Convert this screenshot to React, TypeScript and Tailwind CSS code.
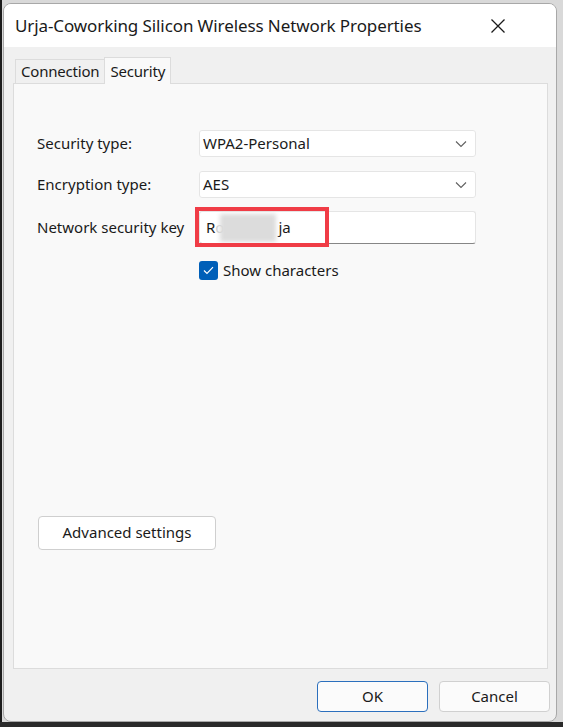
import React from "react";

const font = { fontFamily: '"Segoe UI", "Noto Sans", "Open Sans", sans-serif' };

function Chevron() {
  return (
    <svg width="12" height="8" viewBox="0 0 12 8" className="mr-[8px]">
      <path d="M1 1.5 L6 6.5 L11 1.5" fill="none" stroke="#5f5f5f" strokeWidth="1.1" />
    </svg>
  );
}

export default function App() {
  return (
    <div className="w-[563px] h-[727px] bg-[#d9d9d9] overflow-hidden relative" style={font}>
      <div className="absolute left-0 top-0 w-[2px] h-full bg-[#1c1c1c]" />
      <div className="absolute left-0 bottom-0 w-full h-[5px] bg-[#2a2a2a]" />
      <div className="ml-[3px] mt-[3px] w-[554px] h-[719px] rounded-[8px] border border-[#a8a8a8] bg-[#f0f0f0] overflow-hidden flex flex-col relative z-10">
        {/* title bar */}
        <div className="h-[43px] bg-white flex items-center justify-between shrink-0">
          <span className="ml-[11px] text-[17px] tracking-[-0.1px] text-[#1a1a1a] leading-none">
            Urja-Coworking Silicon Wireless Network Properties
          </span>
          <svg width="16" height="16" viewBox="0 0 16 16" className="mr-[50px]">
            <path d="M1.5 1.5 L14.5 14.5 M14.5 1.5 L1.5 14.5" stroke="#1a1a1a" strokeWidth="1.3" />
          </svg>
        </div>
        {/* tabs */}
        <div className="flex items-end ml-[11px] mt-[10px] h-[26px] text-[15px] text-[#1a1a1a]">
          <div className="h-[24px] px-[5px] flex items-center border-t border-l border-[#dcdcdc] bg-[#f0f0f0] tracking-[-0.2px]">Connection</div>
          <div className="h-[27px] px-[5px] flex items-center border-t border-l border-r border-[#dcdcdc] bg-[#f9f9f9] -mb-px relative z-10 tracking-[-0.2px]">Security</div>
        </div>
        <div className="ml-[9px] mr-[8px] h-[586px] bg-[#f9f9f9] border border-[#dcdcdc] flex flex-col text-[15px] text-[#1a1a1a]">
          <div className="mt-[46px] ml-[23px] flex items-center h-[27px]">
            <span className="w-[162px]">Security type:</span>
            <div className="w-[277px] h-[27px] bg-white border border-[#e5e5e5] rounded-[3px] flex items-center justify-between pl-[3px]">
              <span>WPA2-Personal</span>
              <Chevron />
            </div>
          </div>
          <div className="mt-[14px] ml-[23px] flex items-center h-[27px]">
            <span className="w-[162px]">Encryption type:</span>
            <div className="w-[277px] h-[27px] bg-white border border-[#e5e5e5] rounded-[3px] flex items-center justify-between pl-[3px]">
              <span>AES</span>
              <Chevron />
            </div>
          </div>
          <div className="mt-[13px] ml-[23px] flex items-center h-[33px]">
            <span className="w-[162px]">Network security key</span>
            <div className="relative w-[277px] h-[33px] bg-white border border-[#e5e5e5] border-b-[#868686] rounded-[3px] flex items-center pl-[6px]">
              <span>R</span>
              <span className="text-[#d0d0d0]">o</span>
              <span className="inline-block w-[56px] h-[28px] bg-[#dcdcdc] ml-[-4px] mr-[2px] blur-[2px]" />
              <span>ja</span>
              <div className="absolute left-[-5px] top-[-5px] w-[134px] h-[40px] border-[4px] border-[#f03c46]" />
            </div>
          </div>
          <div className="mt-[15px] ml-[185px] flex items-center">
            <div className="w-[19px] h-[19px] rounded-[3px] bg-[#005fb8] flex items-center justify-center">
              <svg width="11" height="9" viewBox="0 0 11 9">
                <path d="M1 4.5 L4 7.5 L10 1.2" fill="none" stroke="white" strokeWidth="1.2" />
              </svg>
            </div>
            <span className="ml-[5px]">Show characters</span>
          </div>
          <div className="mt-[234px] ml-[24px]">
            <div className="w-[178px] h-[34px] bg-white border border-[#cfcfcf] rounded-[4px] flex items-center justify-center">
              Advanced settings
            </div>
          </div>
        </div>
        <div className="flex justify-end gap-[11px] mr-[6px] mt-[12px] text-[15px] text-[#1a1a1a]">
          <div className="w-[111px] h-[31px] bg-[#fbfbfb] border border-[#2b6fbd] rounded-[4px] flex items-center justify-center">OK</div>
          <div className="w-[111px] h-[31px] bg-[#fbfbfb] border border-[#d0d0d0] rounded-[4px] flex items-center justify-center">Cancel</div>
        </div>
      </div>
    </div>
  );
}
